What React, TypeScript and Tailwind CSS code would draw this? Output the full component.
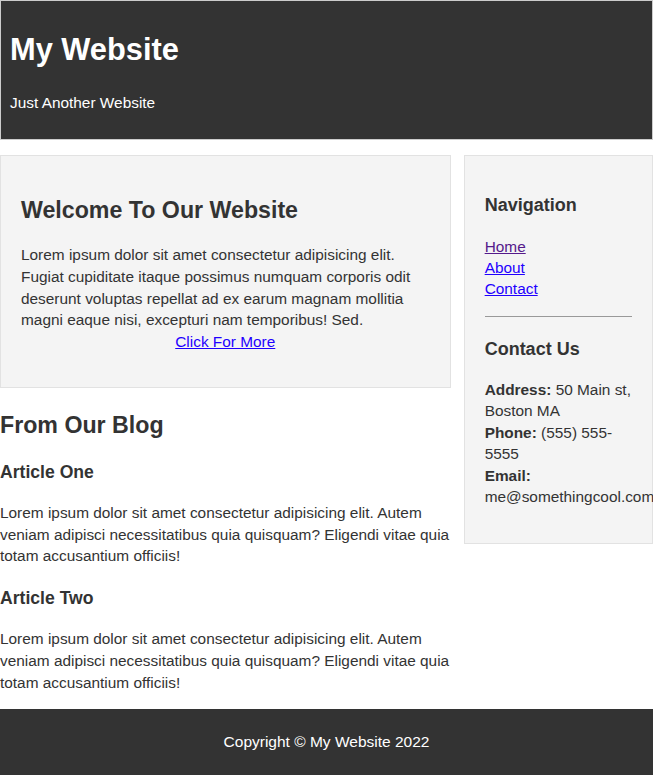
export default function App() {
  return (
    <div className="font-['Liberation_Sans',Arial,sans-serif] text-[15.4px] leading-[21.75px] text-[#333] bg-white">
      <header className="bg-[#333] text-white border border-[#ccc] px-[9px] pb-[25px]">
        <h1 className="text-[30.8px] font-bold leading-[36px] pt-[31px]">My Website</h1>
        <p className="text-[15.4px] leading-[22px] mt-[24px]">Just Another Website</p>
      </header>

      <div className="flex justify-between mt-[15px]">
        <div className="w-[69%]">
          <section className="bg-[#f4f4f4] border border-[#e2e2e2] px-[20px] pt-[20px] pb-[34px]">
            <h2 className="text-[23.2px] font-bold leading-[26px] mt-[21px]">Welcome To Our Website</h2>
            <p className="mt-[21px]">
              Lorem ipsum dolor sit amet consectetur adipisicing elit. Fugiat cupiditate itaque possimus numquam
              corporis odit deserunt voluptas repellat ad ex earum magnam mollitia magni eaque nisi, excepturi nam
              temporibus! Sed.
            </p>
            <a href="#" className="block text-center underline text-[#1f00ff]">
              Click For More
            </a>
          </section>

          <h2 className="text-[23.2px] font-bold leading-[26px] mt-[24px]">From Our Blog</h2>

          <article>
            <h3 className="text-[17.6px] font-bold leading-[20px] mt-[24px]">Article One</h3>
            <p className="mt-[20px]">
              Lorem ipsum dolor sit amet consectetur adipisicing elit. Autem veniam adipisci necessitatibus quia
              quisquam? Eligendi vitae quia totam accusantium officiis!
            </p>
          </article>
          <article>
            <h3 className="text-[17.6px] font-bold leading-[20px] mt-[21px]">Article Two</h3>
            <p className="mt-[20px]">
              Lorem ipsum dolor sit amet consectetur adipisicing elit. Autem veniam adipisci necessitatibus quia
              quisquam? Eligendi vitae quia totam accusantium officiis!
            </p>
          </article>
        </div>

        <aside className="w-[29%] self-start bg-[#f4f4f4] border border-[#e2e2e2] px-[20px] pt-[20px] pb-[36px]">
          <h3 className="text-[18px] font-bold leading-[21px] mt-[19px]">Navigation</h3>
          <ul className="mt-[20px] leading-[21px]">
            <li>
              <a href="#" className="underline text-[#551a8b]">Home</a>
            </li>
            <li>
              <a href="#" className="underline text-[#1f00ff]">About</a>
            </li>
            <li>
              <a href="#" className="underline text-[#1f00ff]">Contact</a>
            </li>
          </ul>
          <hr className="mt-[17px] border-t border-[#999]" />
          <h3 className="text-[18px] font-bold leading-[21px] mt-[22px]">Contact Us</h3>
          <p className="mt-[19px] leading-[21.4px]">
            <strong>Address:</strong> 50 Main st, Boston MA
            <br />
            <strong>Phone:</strong> (555) 555-5555
            <br />
            <strong>Email:</strong> me@somethingcool.com
          </p>
        </aside>
      </div>

      <footer className="bg-[#333] text-white text-center mt-[16px] h-[66px] flex items-center justify-center">
        <p className="text-[15.5px]">Copyright &copy; My Website 2022</p>
      </footer>
    </div>
  );
}
